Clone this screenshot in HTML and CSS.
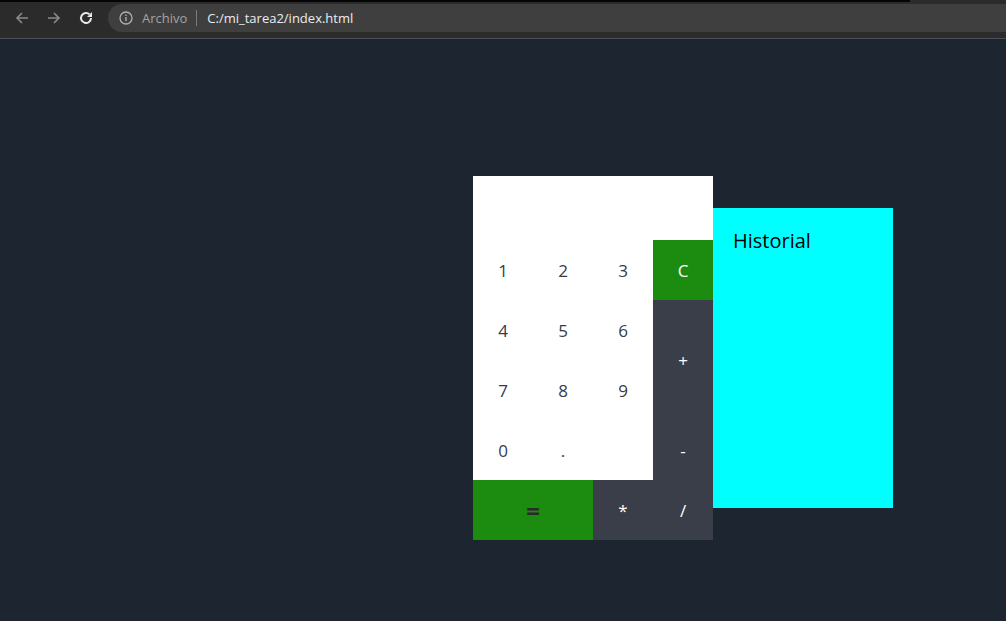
FILE: index.html
```html
<!DOCTYPE html>
<html lang="es">
<head>
<meta charset="utf-8">
<title>Calculadora</title>
<link rel="stylesheet" href="styles.css">
</head>
<body>
<header class="chrome">
  <div class="tabline"></div>
  <div class="toolbar">
    <span class="nav-btn dim">
      <svg width="16" height="16" viewBox="0 0 16 16"><path d="M14 8H3M8 3L3 8l5 5" fill="none" stroke="currentColor" stroke-width="1.6"/></svg>
    </span>
    <span class="nav-btn dim">
      <svg width="16" height="16" viewBox="0 0 16 16"><path d="M2 8h11M8 3l5 5-5 5" fill="none" stroke="currentColor" stroke-width="1.6"/></svg>
    </span>
    <span class="nav-btn">
      <svg width="16" height="16" viewBox="0 0 16 16"><path d="M13 8a5 5 0 1 1-1.5-3.6" fill="none" stroke="currentColor" stroke-width="2"/><path d="M14 2v5H9z" fill="currentColor"/></svg>
    </span>
    <div class="omnibox">
      <svg class="info" width="14" height="14" viewBox="0 0 14 14"><circle cx="7" cy="7" r="6" fill="none" stroke="currentColor" stroke-width="1.3"/><rect x="6.3" y="6" width="1.4" height="4.2" fill="currentColor"/><rect x="6.3" y="3.6" width="1.4" height="1.4" fill="currentColor"/></svg>
      <span class="archivo">Archivo</span>
      <span class="sep"></span>
      <span class="url">C:/mi_tarea2/index.html</span>
    </div>
  </div>
</header>
<main class="page">
  <div class="calc">
    <div class="display"></div>
    <button class="key num">1</button>
    <button class="key num">2</button>
    <button class="key num">3</button>
    <button class="key green light">C</button>
    <button class="key num">4</button>
    <button class="key num">5</button>
    <button class="key num">6</button>
    <button class="key op tall">+</button>
    <button class="key num">7</button>
    <button class="key num">8</button>
    <button class="key num">9</button>
    <button class="key num">0</button>
    <button class="key num">.</button>
    <div class="key num"></div>
    <button class="key op">-</button>
    <button class="key green wide">=</button>
    <button class="key op">*</button>
    <button class="key op">/</button>
  </div>
  <aside class="history">
    <h2 class="history-title">Historial</h2>
  </aside>
</main>
</body>
</html>
```
FILE: styles.css
```css
html, body {
  margin: 0;
  padding: 0;
  height: 100%;
}
body {
  background: #1d2530;
  font-family: "Open Sans", "Noto Sans", sans-serif;
  overflow: hidden;
}
.chrome {
  height: 39px;
  background: #2b2b2b;
  border-bottom: 1px solid #4a5058;
  box-sizing: border-box;
}
.tabline {
  height: 2px;
  width: 910px;
  background: #050505;
}
.toolbar {
  display: flex;
  align-items: center;
  height: 32px;
  padding-left: 12px;
}
.nav-btn {
  width: 20px;
  height: 20px;
  display: flex;
  align-items: center;
  justify-content: center;
  color: #e8e8e8;
  margin-right: 12px;
}
.nav-btn.dim {
  color: #8a8a8a;
}
.omnibox {
  flex: 1;
  height: 28px;
  background: #3f3f3f;
  border-radius: 14px 0 0 14px;
  display: flex;
  align-items: center;
  padding-left: 11px;
  font-size: 13px;
}
.info {
  color: #b0b0b0;
  margin-right: 9px;
}
.archivo {
  color: #a4a4a4;
}
.sep {
  width: 1px;
  height: 16px;
  background: #7a7a7a;
  margin: 0 10px 0 9px;
}
.url {
  color: #ececec;
}
.page {
  display: flex;
  align-items: flex-start;
  padding: 137px 0 0 473px;
}
.calc {
  display: grid;
  grid-template-columns: repeat(4, 60px);
  grid-template-rows: 64px repeat(5, 60px);
}
.display {
  grid-column: 1 / 5;
  background: #ffffff;
}
.key {
  border: none;
  margin: 0;
  padding: 0;
  font-family: "Open Sans", "Noto Sans", sans-serif;
  font-weight: 400;
  font-size: 17px;
  display: flex;
  align-items: center;
  justify-content: center;
}
.num {
  background: #ffffff;
  color: #353b47;
}
.green {
  background: #1b8c10;
  color: #2a2a2a;
}
.green.light {
  color: #ffffff;
}
.op {
  background: #3a3e48;
  color: #ffffff;
}
.tall {
  grid-row: span 2;
}
.wide {
  grid-column: span 2;
  font-size: 24px;
  font-weight: 700;
}
.history {
  margin-top: 32px;
  width: 180px;
  height: 300px;
  background: #00ffff;
  padding: 20px;
  box-sizing: border-box;
}
.history-title {
  margin: 0;
  font-size: 20px;
  font-weight: 400;
  line-height: 26px;
  color: #000000;
}
```
